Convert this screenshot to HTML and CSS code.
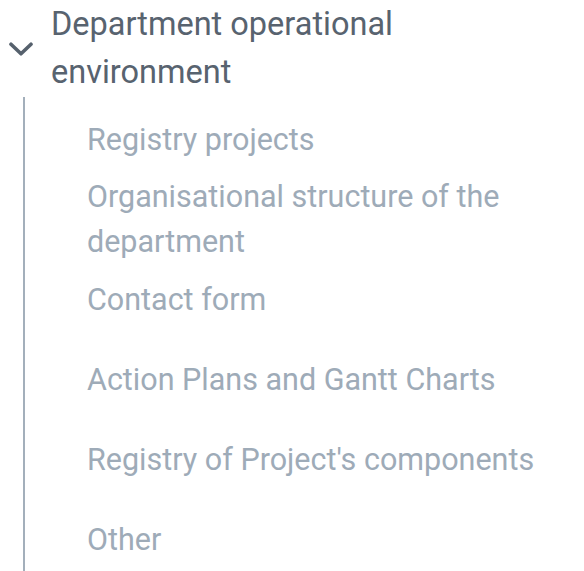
FILE: index.html
```html
<!DOCTYPE html>
<html lang="en">
<head>
<meta charset="utf-8">
<title>Navigation</title>
<link rel="stylesheet" href="styles.css">
</head>
<body>
<nav class="tree">
  <div class="group-header">
    <span class="chevron">
      <svg width="24" height="14" viewBox="0 0 24 14" aria-hidden="true">
        <path d="M2 2.2 L12 11.8 L22 2.2" fill="none" stroke="#56616d" stroke-width="3.6" stroke-linecap="round" stroke-linejoin="round"/>
      </svg>
    </span>
    <span class="group-title">Department operational environment</span>
  </div>
  <ul class="children">
    <li class="item">Registry projects</li>
    <li class="item item-multi">Organisational structure of the department</li>
    <li class="item">Contact form</li>
    <li class="item item-wide">Action Plans and Gantt Charts</li>
    <li class="item item-wide">Registry of Project's components</li>
    <li class="item item-wide">Other</li>
  </ul>
</nav>
</body>
</html>
```
FILE: styles.css
```css
html, body {
  margin: 0;
  padding: 0;
  background: #ffffff;
}
body {
  font-family: Roboto, "Liberation Sans", sans-serif;
  width: 584px;
  height: 571px;
  overflow: hidden;
}
.tree {
  display: flex;
  flex-direction: column;
  height: 571px;
}
.group-header {
  display: flex;
  align-items: center;
  flex: none;
}
.chevron {
  width: 51px;
  flex: none;
  display: flex;
  justify-content: flex-start;
  padding-left: 9px;
  padding-top: 2px;
  box-sizing: border-box;
}
.chevron svg {
  display: block;
}
.group-title {
  font-size: 32.5px;
  line-height: 48px;
  color: #58636f;
  width: 440px;
}
.children {
  list-style: none;
  margin: 1px 0 0 23px;
  padding: 20px 0 0 62px;
  border-left: 2px solid #a3afbb;
  display: flex;
  flex-direction: column;
  gap: 12px;
  flex: 1;
  min-height: 0;
  overflow: hidden;
}
.item {
  font-size: 30.5px;
  line-height: 45px;
  color: #9eabb8;
  width: 470px;
  flex: none;
}
.item-multi {
  margin-bottom: 1px;
}
.item-wide {
  margin-top: 23px;
}
```
